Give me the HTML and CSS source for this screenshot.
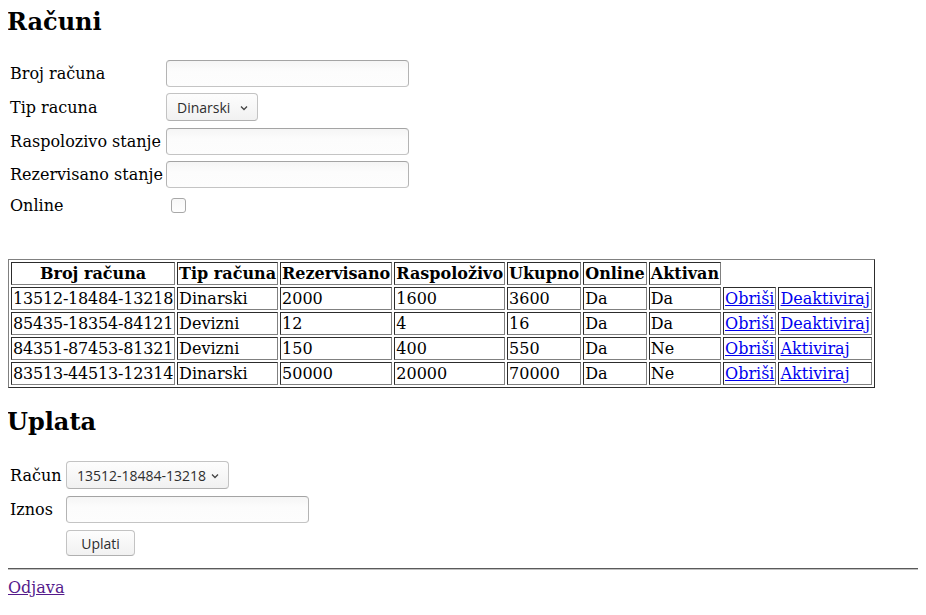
FILE: index.html
```html
<!DOCTYPE html>
<html lang="sr">
<head>
<meta charset="utf-8">
<title>Računi</title>
<link rel="stylesheet" href="styles.css">
</head>
<body>
<h1 class="title title-first">Računi</h1>
<form class="form account-form">
  <label class="label">Broj računa</label>
  <input class="field field-text" type="text">
  <label class="label">Tip racuna</label>
  <div class="field field-select select-type"><span>Dinarski</span><svg class="chev" width="8" height="6" viewBox="0 0 8 6"><path d="M1 1.5 L4 4.5 L7 1.5" fill="none" stroke="#444" stroke-width="1.3"/></svg></div>
  <label class="label">Raspolozivo stanje</label>
  <input class="field field-text" type="text">
  <label class="label">Rezervisano stanje</label>
  <input class="field field-text" type="text">
  <label class="label">Online</label>
  <div class="check-cell"><span class="checkbox"></span></div>
</form>

<table class="accounts">
  <tr>
    <th>Broj računa</th><th>Tip računa</th><th>Rezervisano</th><th>Raspoloživo</th><th>Ukupno</th><th>Online</th><th>Aktivan</th>
  </tr>
  <tr>
    <td>13512-18484-13218</td><td>Dinarski</td><td>2000</td><td>1600</td><td>3600</td><td>Da</td><td>Da</td><td><a href="#">Obriši</a></td><td><a href="#">Deaktiviraj</a></td>
  </tr>
  <tr>
    <td>85435-18354-84121</td><td>Devizni</td><td>12</td><td>4</td><td>16</td><td>Da</td><td>Da</td><td><a href="#">Obriši</a></td><td><a href="#">Deaktiviraj</a></td>
  </tr>
  <tr>
    <td>84351-87453-81321</td><td>Devizni</td><td>150</td><td>400</td><td>550</td><td>Da</td><td>Ne</td><td><a href="#">Obriši</a></td><td><a href="#">Aktiviraj</a></td>
  </tr>
  <tr>
    <td>83513-44513-12314</td><td>Dinarski</td><td>50000</td><td>20000</td><td>70000</td><td>Da</td><td>Ne</td><td><a href="#">Obriši</a></td><td><a href="#">Aktiviraj</a></td>
  </tr>
</table>

<h1 class="title">Uplata</h1>
<form class="form payment-form">
  <label class="label">Račun</label>
  <div class="field field-select select-account"><span>13512-18484-13218</span><svg class="chev" width="8" height="6" viewBox="0 0 8 6"><path d="M1 1.5 L4 4.5 L7 1.5" fill="none" stroke="#444" stroke-width="1.3"/></svg></div>
  <label class="label">Iznos</label>
  <input class="field field-text" type="text">
  <span></span>
  <button class="field button" type="button">Uplati</button>
</form>
<div class="divider"></div>
<a class="logout" href="#">Odjava</a>
</body>
</html>
```
FILE: styles.css
```css
html, body {
  margin: 0;
  padding: 0;
}
body {
  margin: 8px;
  font-family: "DejaVu Serif", serif;
  font-size: 16px;
  color: #000;
  background: #fff;
}
.title {
  font-size: 24px;
  font-weight: bold;
  margin: 20px 0 20px -1px;
  line-height: 28px;
}
.title-first {
  margin-top: 0;
}
.form {
  display: grid;
  column-gap: 0;
  row-gap: 6px;
  align-items: center;
  padding-left: 2px;
}
.account-form {
  grid-template-columns: 156px auto;
  grid-template-rows: 27px 29px 27px 27px 23px;
  margin-top: 24px;
  justify-content: start;
}
.payment-form {
  grid-template-columns: 56px auto;
  grid-template-rows: 28px 27px 26px;
  row-gap: 7px;
  margin-top: 25px;
  justify-content: start;
}
.label {
  line-height: 19px;
  white-space: nowrap;
}
.field {
  box-sizing: border-box;
  font-family: "Open Sans", "Noto Sans", sans-serif;
  font-size: 14px;
  color: #2e2e2e;
  border-radius: 4px;
  margin: 0;
}
.field-text {
  width: 243px;
  height: 27px;
  border: 1px solid #b4b4b4;
  border-top-color: #a4a4a4;
  border-bottom-color: #c4c4c4;
  background: linear-gradient(#f5f5f5, #fcfcfc 40%, #fdfdfd);
  padding: 0 6px;
}
.field-select {
  height: 28px;
  align-self: start;
  display: flex;
  align-items: center;
  justify-content: space-between;
  border: 1px solid #c3c3c3;
  border-bottom-color: #b0b0b0;
  background: linear-gradient(#fdfdfd, #f1f1f1);
  padding: 0 9px 0 10px;
}
.select-type {
  width: 92px;
}
.select-account {
  width: 163px;
}
.chev {
  display: block;
  margin-top: 1px;
}
.button {
  width: 69px;
  height: 26px;
  border: 1px solid #c3c3c3;
  border-bottom-color: #b0b0b0;
  background: linear-gradient(#fdfdfd, #f1f1f1);
  padding: 0;
  text-align: center;
}
.check-cell {
  display: flex;
  align-items: center;
  padding-left: 5px;
}
.checkbox {
  display: block;
  width: 13px;
  height: 13px;
  border: 1px solid #a8a8a8;
  border-radius: 3px;
  background: linear-gradient(#f8f8f8, #fefefe);
}
.accounts {
  margin-top: 42px;
  border: 1px outset #808080;
  border-spacing: 2px;
  border-collapse: separate;
}
.accounts th,
.accounts td {
  border: 1px inset #808080;
  padding: 1px;
  line-height: 19px;
  white-space: nowrap;
}
.accounts th {
  font-weight: bold;
  text-align: center;
}
.accounts td {
  text-align: left;
}
.accounts td:first-child {
  letter-spacing: -0.2px;
}
.accounts a {
  color: #0000ee;
  text-decoration: underline;
}
.divider {
  margin: 12px -8px 8px -1px;
  border-top: 1px solid #5a5a5a;
  border-bottom: 1px solid #c0c0c0;
  height: 0;
}
.logout {
  color: #551a8b;
  text-decoration: underline;
  line-height: 19px;
}
```
